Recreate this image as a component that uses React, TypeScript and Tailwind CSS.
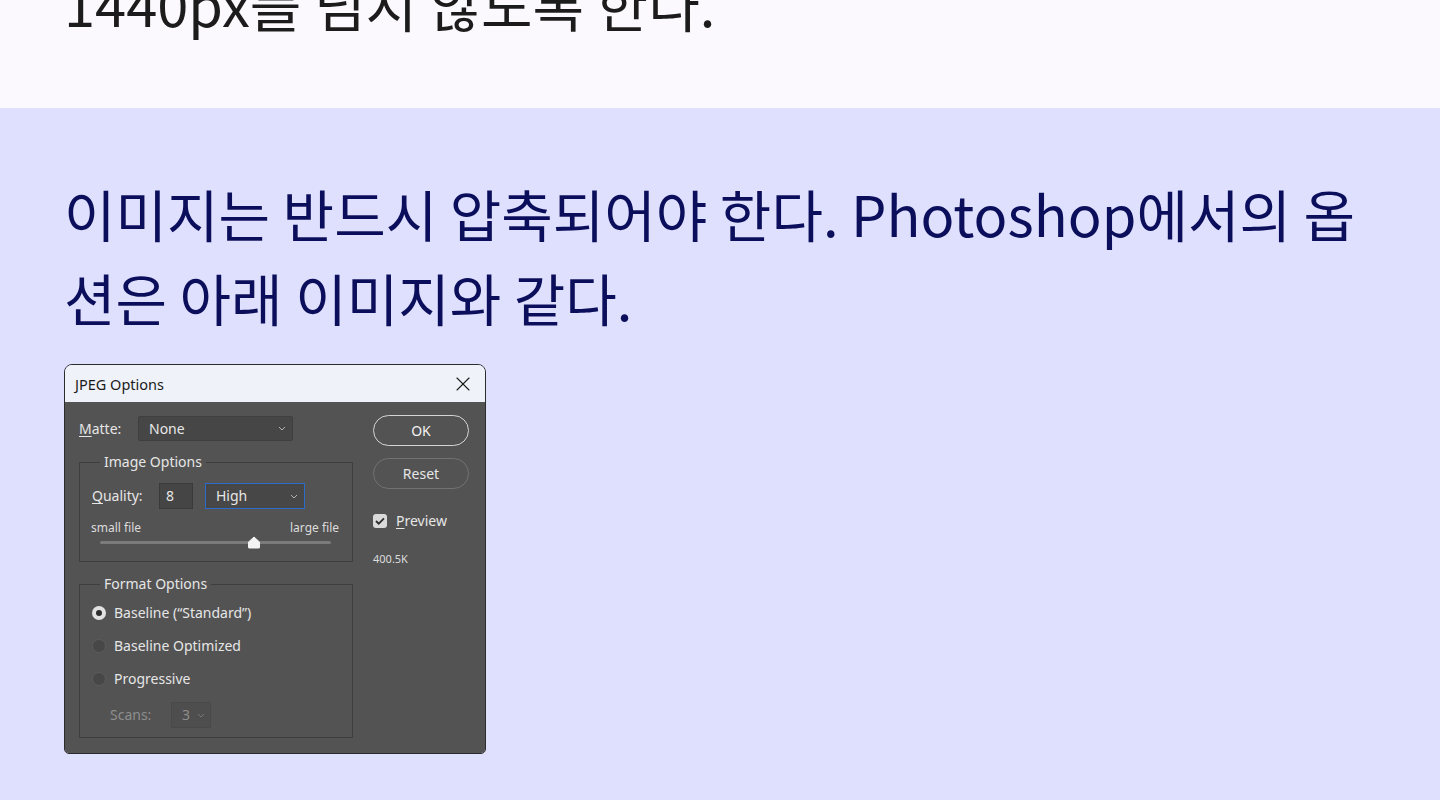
import { X } from "lucide-react";

// ============================================================================
// Small pieces of the Photoshop dialog
// ============================================================================

function Chevron({ color = "#b4b4b4" }: { color?: string }) {
	return (
		<svg width="8" height="5" viewBox="0 0 8 5" fill="none">
			<path d="M1 1l3 3 3-3" stroke={color} strokeWidth="1" />
		</svg>
	);
}

function Radio({ checked, label }: { checked?: boolean; label: string }) {
	return (
		<div className="flex items-center gap-[8px] h-[20px]">
			{checked ? (
				<span className="w-[14px] h-[14px] rounded-full bg-[#e2e2e2] flex items-center justify-center">
					<span className="w-[6px] h-[6px] rounded-full bg-[#2e2e2e]" />
				</span>
			) : (
				<span className="w-[14px] h-[14px] rounded-full bg-[#474747] border border-[#5c5c5c]" />
			)}
			<span>{label}</span>
		</div>
	);
}

function JpegOptionsDialog() {
	return (
		<div
			className="w-[422px] h-[390px] flex flex-col border border-[#2c2c2c] rounded-t-[8px] rounded-b-[5px] overflow-hidden text-[14px] leading-[20px]"
			style={{ fontFamily: '"Noto Sans", "Open Sans", sans-serif' }}
		>
			{/* Title bar */}
			<div className="h-[37px] bg-[#eff2f9] flex items-center justify-between pl-[10px] pr-[10px] text-[#1b1b1b]">
				<span className="text-[14.5px]">JPEG Options</span>
				<X className="w-[24px] h-[24px]" strokeWidth={1.1} />
			</div>

			{/* Body */}
			<div className="flex-1 bg-[#535353] text-[#e6e6e6] flex pl-[14px] pr-[16px] pt-[14px] gap-[20px]">
				{/* Left column */}
				<div className="w-[274px] flex flex-col">
					<div className="flex items-center h-[25px]">
						<span className="w-[59px]">
							<span className="underline underline-offset-2">M</span>atte:
						</span>
						<div className="w-[155px] h-[25px] bg-[#464646] border border-[#3f3f3f] rounded-[2px] flex items-center justify-between pl-[10px] pr-[6px]">
							<span>None</span>
							<Chevron />
						</div>
					</div>

					<fieldset className="mt-[11px] border border-[#3e3e3e]">
						<legend className="ml-[20px] px-[4px]">Image Options</legend>
						<div className="pt-[11px] pl-[12px] pr-[13px] pb-[12px]">
							<div className="flex items-center h-[26px]">
								<span className="w-[67px]">
									<span className="underline underline-offset-2">Q</span>uality:
								</span>
								<div className="w-[34px] h-[26px] bg-[#454545] border border-[#3a3a3a] flex items-center pl-[6px]">
									8
								</div>
								<div className="ml-[12px] w-[100px] h-[26px] bg-[#474747] border border-[#2b6ccb] flex items-center justify-between pl-[10px] pr-[6px]">
									<span>High</span>
									<Chevron />
								</div>
							</div>
							<div className="mt-[12px] h-[14px] flex items-center justify-between text-[12px] leading-[14px] text-[#dcdcdc] -ml-px">
								<span>small file</span>
								<span>large file</span>
							</div>
							<div className="relative h-[14px] flex items-center ml-[8px] mr-[8px]">
								<div className="w-full h-[3px] bg-[#7b7b7b] rounded-full" />
								<svg
									className="absolute left-[154px] top-[1px] -translate-x-1/2"
									width="13"
									height="13"
									viewBox="0 0 13 13"
								>
									<path
										d="M6.5 1 L12 6 L12 11.5 Q12 12 11.5 12 L1.5 12 Q1 12 1 11.5 L1 6 Z"
										fill="#f4f4f4"
										stroke="#f4f4f4"
										strokeLinejoin="round"
									/>
								</svg>
							</div>
						</div>
					</fieldset>

					<fieldset className="mt-[12px] border border-[#3e3e3e]">
						<legend className="ml-[20px] px-[4px]">Format Options</legend>
						<div className="pt-[9px] pl-[12px] pb-[9px] flex flex-col gap-[13px]">
							<Radio checked label={"Baseline (\u201cStandard\u201d)"} />
							<Radio label="Baseline Optimized" />
							<Radio label="Progressive" />
							<div className="flex items-center h-[26px] text-[#8d8d8d]">
								<span className="ml-[18px] w-[61px]">Scans:</span>
								<div className="w-[40px] h-[26px] bg-[#4e4e4e] border border-[#494949] flex items-center justify-between pl-[10px] pr-[5px]">
									<span>3</span>
									<Chevron color="#777777" />
								</div>
							</div>
						</div>
					</fieldset>
				</div>

				{/* Right column */}
				<div className="w-[96px] flex flex-col -mt-px">
					<div className="h-[31px] rounded-full border-[1.5px] border-[#d4d4d4] flex items-center justify-center text-[#f2f2f2]">
						OK
					</div>
					<div className="mt-[12px] h-[31px] rounded-full border border-[#727272] flex items-center justify-center">
						Reset
					</div>
					<div className="mt-[22px] h-[20px] flex items-center gap-[9px]">
						<span className="w-[14px] h-[14px] rounded-[3px] bg-[#dadada] flex items-center justify-center">
							<svg width="10" height="8" viewBox="0 0 10 8" fill="none">
								<path d="M1 4l2.7 2.7L9 1.3" stroke="#2f2f2f" strokeWidth="1.8" />
							</svg>
						</span>
						<span>
							<span className="underline underline-offset-2">P</span>review
						</span>
					</div>
					<div className="mt-[20px] text-[11px] leading-[16px] text-[#dcdcdc]">400.5K</div>
				</div>
			</div>
		</div>
	);
}

// ============================================================================
// Page
// ============================================================================

export default function App() {
	return (
		<div
			className="w-full min-h-[800px] bg-[#dfdffe]"
			style={{ fontFamily: '"Noto Sans CJK KR", "Noto Sans", sans-serif' }}
		>
			<section className="h-[108px] bg-[#fbf9fe] px-[64px] overflow-hidden">
				<p className="-mt-[39px] text-[56px] leading-[84px] text-[#1c1c1c]">
					1440px를 넘지 않도록 한다.
				</p>
			</section>

			<section className="px-[64px] pt-[63px] pb-[46px]">
				<h2 className="text-[56px] leading-[84px] text-[#0b0e5a]">
					이미지는 반드시 압축되어야 한다. Photoshop에서의 옵션은 아래 이미지와 같다.
				</h2>
				<div className="mt-[25px]">
					<JpegOptionsDialog />
				</div>
			</section>
		</div>
	);
}
